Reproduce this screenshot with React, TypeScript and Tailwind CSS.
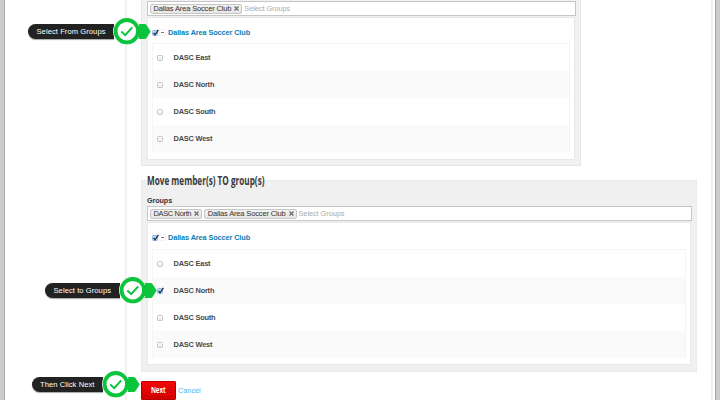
import React from "react";

const names = ["DASC East", "DASC North", "DASC South", "DASC West"];

function Checkbox({ checked = false }: { checked?: boolean }) {
  return (
    <span
      className={
        "relative block size-[6px] shrink-0 rounded-[1.5px] border " +
        (checked
          ? "border-[#8fb4e0] bg-[#bcdcf8]"
          : "border-[#c4c4c4] bg-gradient-to-b from-white to-[#e9e9e9]")
      }
    >
      {checked && (
        <svg className="absolute -left-[1px] -top-[2px] h-[8px] w-[8px]" viewBox="0 0 8 8" fill="none">
          <path d="M1.6 3.8 L3 5.8 L6.4 0.8" stroke="#10243f" strokeWidth="1.2" />
        </svg>
      )}
    </span>
  );
}

function Tag({ label }: { label: string }) {
  return (
    <span className="flex h-[10px] items-center gap-[3px] whitespace-nowrap rounded-[2px] border border-[#c6c6c6] bg-gradient-to-b from-[#f1f1f1] to-[#e6e6e6] pl-[2.5px] pr-[2px] text-[7.5px] leading-none text-[#333]">
      <span className={label.startsWith("DASC") ? "tracking-[-0.36px]" : "tracking-[-0.15px]"}>{label}</span>
      <svg className="h-[5px] w-[5px]" viewBox="0 0 5 5">
        <path d="M0.5 0.5 L4.5 4.5 M4.5 0.5 L0.5 4.5" stroke="#666" strokeWidth="1.1" />
      </svg>
    </span>
  );
}

function GroupSelect({ tags }: { tags: string[] }) {
  return (
    <div className="flex h-[15px] items-center gap-[2px] border border-[#c6c6c6] bg-white pl-[2px]">
      {tags.map((t) => (
        <Tag key={t} label={t} />
      ))}
      <span className="whitespace-nowrap text-[7.3px] leading-none tracking-[-0.03px] text-[#aaa]">
        Select Groups
      </span>
    </div>
  );
}

function GroupTree({ selected, header }: { selected?: string; header: string }) {
  return (
    <div className="mr-[1px] mt-[1px] flex h-[143px] flex-col border border-[#e8e8e8] bg-white px-[4px]">
      <div className={"flex items-center " + header}>
        <Checkbox checked />
        <span className="ml-[1px] flex size-[7px] items-center justify-center border border-[#f2f2f2]">
          <span className="h-px w-[3px] bg-[#777]" />
        </span>
        <span className="whitespace-nowrap pl-[2px] text-[7.3px] font-bold leading-none tracking-[-0.09px] text-[#0b7db1]">
          Dallas Area Soccer Club
        </span>
      </div>
      <div className="border border-b-0 border-[#f5f5f5]">
        {names.map((name, i) => (
          <div
            key={name}
            className={"flex h-[27px] items-center pl-[4px] " + (i % 2 ? "bg-[#fafafa]" : "bg-white")}
          >
            <Checkbox checked={name === selected} />
            <span className="ml-[10.5px] whitespace-nowrap text-[7.4px] font-bold leading-none tracking-[-0.2px] text-[#4a4a4a]">
              {name}
            </span>
          </div>
        ))}
      </div>
    </div>
  );
}

function Callout({ label, place, pill }: { label: string; place: string; pill: string }) {
  return (
    <div className={"absolute flex h-[28px] items-center " + place}>
      <div
        className={
          "flex h-[15px] shrink-0 items-center whitespace-nowrap rounded-l-full bg-[#222] pl-[8.5px] pt-[1px] text-[7.6px] leading-none tracking-[0.06px] text-white shadow-[0_1px_1px_rgba(0,0,0,0.35)] " +
          pill
        }
      >
        {label}
      </div>
      <svg className="-ml-[1px] h-[28px] w-[38px] shrink-0" viewBox="0 0 38 28">
        <path d="M20 7 H31.6 Q32.8 7 33.5 8.1 L37.7 14.4 L33.5 20.9 Q32.8 22 31.6 22 H20 Z" fill="#0ac43c" />
        <circle cx="13.8" cy="14.2" r="13.8" fill="#e9f5ec" />
        <path d="M24 9 H30 V20 H24 Z" fill="#0ac43c" />
        <circle cx="13.8" cy="14.2" r="11.2" fill="#fff" stroke="#0ac43c" strokeWidth="3.8" />
        <path d="M8.3 14.6 L12.2 18.2 L19.2 10.4" fill="none" stroke="#0ac43c" strokeWidth="2" />
      </svg>
    </div>
  );
}

export default function App() {
  return (
    <div className="relative flex h-[400px] w-[720px] overflow-hidden bg-white font-['Liberation_Sans',Arial,sans-serif]">
      <div className="w-[5px] shrink-0 border-r border-[#aaa] bg-[#cbcbcb]" />
      <div className="w-[120px] shrink-0" />
      <div className="w-[2px] shrink-0 bg-[#f1f1f1]" />
      <main className="flex w-[584px] shrink-0 flex-col items-start pl-[14px]">
        <section className="h-[166px] w-[440px] border border-t-0 border-[#e6e6e6] bg-[#f1f1f1] pl-[5px] pr-[4px] pt-[1px]">
          <GroupSelect tags={["Dallas Area Soccer Club"]} />
          <GroupTree header="h-[25px] pt-[4px]" />
        </section>
        <section className="mt-[14px] h-[192px] w-[556px] border border-[#ebebeb] bg-[#f0f0f0] pl-[5px] pr-[4px]">
          <h2 className="-mt-[8px] flex h-[17px] w-[119px] items-start whitespace-nowrap text-[#3a3a3a]">
            <span className="origin-left scale-x-[0.71] font-['Open_Sans',sans-serif] text-[11.5px] font-bold leading-[16px]">
              Move member(s) TO group(s)
            </span>
          </h2>
          <div className="mt-[6px] h-[10px] text-[7.2px] font-bold leading-[10px] tracking-[-0.08px] text-[#333]">
            Groups
          </div>
          <GroupSelect tags={["DASC North", "Dallas Area Soccer Club"]} />
          <GroupTree selected="DASC North" header="h-[26px] pt-[3px]" />
        </section>
        <div className="mt-[9px] flex items-center">
          <button className="flex h-[19px] w-[35px] items-center justify-center rounded-[1px] border border-[#b80000] bg-gradient-to-b from-[#f30808] to-[#d00000] font-['Open_Sans',sans-serif] text-[8.5px] font-bold leading-none text-white">
            <span className="scale-x-[0.72]">Next</span>
          </button>
          <a className="ml-[2px] text-[7.3px] leading-none text-[#51b5ec]">Cancel</a>
        </div>
      </main>
      <div className="w-[2px] shrink-0 bg-[#eee]" />
      <div className="w-[2px] shrink-0" />
      <div className="w-[5px] shrink-0 border-l border-[#a5a5a5] bg-[#cbcbcb]" />

      <Callout label="Select From Groups" place="left-[28px] top-[17px]" pill="w-[86px]" />
      <Callout label="Select to Groups" place="left-[45px] top-[276px]" pill="w-[75px]" />
      <Callout label="Then Click Next" place="left-[31.5px] top-[370px]" pill="w-[71px]" />
    </div>
  );
}
